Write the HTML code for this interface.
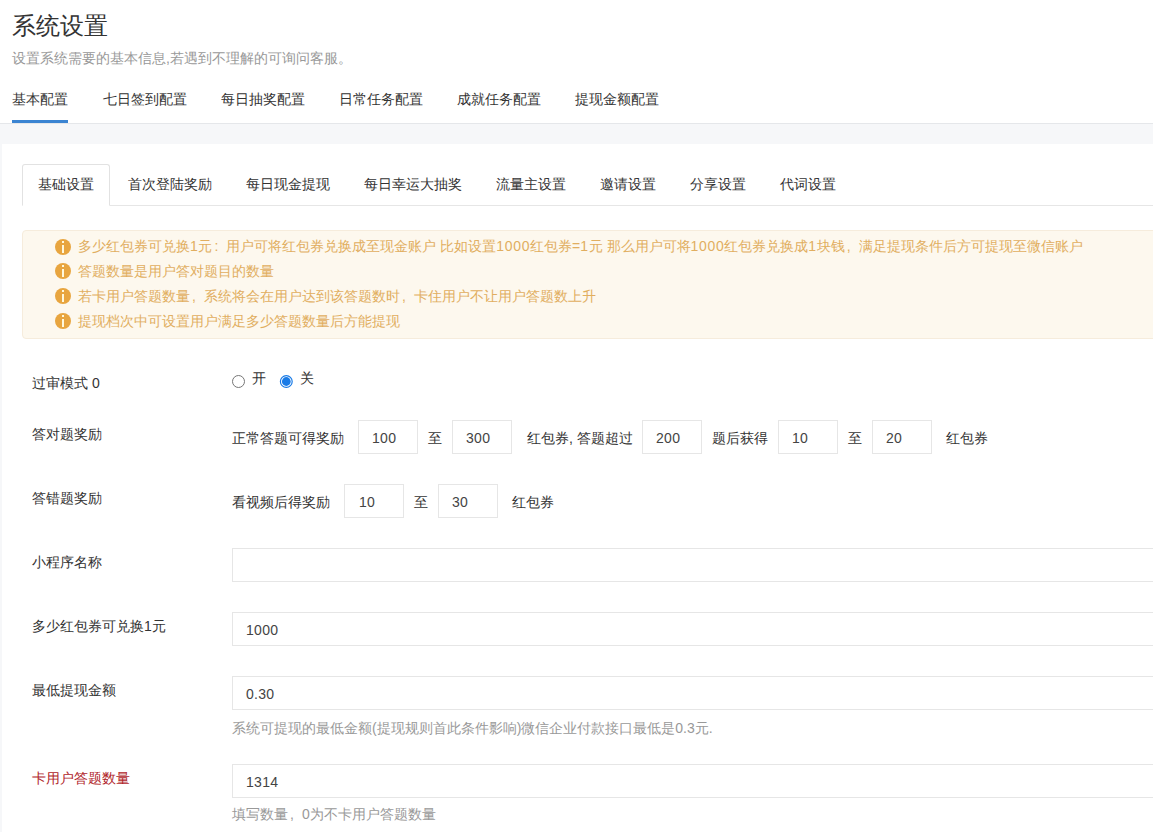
<!DOCTYPE html>
<html><head><meta charset="utf-8">
<style>
*{margin:0;padding:0;box-sizing:border-box}
html,body{width:1153px;height:832px;overflow:hidden;background:#fff}
body{position:relative;font-family:"Liberation Sans",sans-serif;font-size:14px;color:#333}
.a{position:absolute;white-space:nowrap;line-height:20px}
.title{left:12px;top:12px;font-size:24px;line-height:28px;color:#333}
.sub{left:12px;top:48px;color:#999}
.ht{top:89px;color:#333}
.uline{position:absolute;left:12px;top:120px;width:56px;height:3px;background:#3b84d2}
.hline{position:absolute;left:0;top:123px;width:1153px;height:1px;background:#e5e7ea}
.band{position:absolute;left:0;top:124px;width:1153px;height:708px;background:#f6f7f9}
.panel{position:absolute;left:2px;top:144px;width:1151px;height:688px;background:#fff}
.tabline{position:absolute;left:22px;top:205px;width:1131px;height:1px;background:#e6e6e6}
.tabact{position:absolute;left:22px;top:164px;width:88px;height:42px;border:1px solid #e2e2e2;border-bottom:1px solid #fff;border-radius:3px 3px 0 0;background:#fff}
.pt{top:174px;color:#333}
.alert{position:absolute;left:22px;top:230px;width:1140px;height:109px;background:#fdf8ee;border:1px solid #f6ecdc;border-radius:4px}
.ic{position:absolute;left:55px;width:16px;height:16px;border-radius:50%;background:#e8a53f}
.ic:before{content:"";position:absolute;left:7px;top:2px;width:2px;height:2px;background:#fff8dc}
.ic:after{content:"";position:absolute;left:7px;top:5.5px;width:2px;height:8px;background:#fff8dc}
.at{left:78px;color:#e1ae60}.at b{font-weight:normal;letter-spacing:0.65px}
.lbl{left:32px;color:#333}
.inp{position:absolute;height:34px;border:1px solid #e6e6e6;background:#fff}
.iv{position:absolute;color:#444;margin:0 0 0 1px;letter-spacing:0.3px}
.help{left:232px;color:#999}
.fw{font-style:normal;display:inline-block;width:14px;padding-left:2px}
</style></head><body>
<div class="a title">系统设置</div>
<div class="a sub">设置系统需要的基本信息,若遇到不理解的可询问客服。</div>
<div class="a ht" style="left:12px">基本配置</div>
<div class="a ht" style="left:102.7px">七日签到配置</div>
<div class="a ht" style="left:220.8px">每日抽奖配置</div>
<div class="a ht" style="left:338.8px">日常任务配置</div>
<div class="a ht" style="left:456.8px">成就任务配置</div>
<div class="a ht" style="left:574.8px">提现金额配置</div>
<div class="uline"></div>
<div class="hline"></div>
<div class="band"></div>
<div class="panel"></div>
<div class="tabline"></div>
<div class="tabact"></div>
<div class="a pt" style="left:38px">基础设置</div>
<div class="a pt" style="left:128px">首次登陆奖励</div>
<div class="a pt" style="left:246px">每日现金提现</div>
<div class="a pt" style="left:364px">每日幸运大抽奖</div>
<div class="a pt" style="left:496px">流量主设置</div>
<div class="a pt" style="left:600px">邀请设置</div>
<div class="a pt" style="left:690px">分享设置</div>
<div class="a pt" style="left:780px">代词设置</div>

<div class="alert"></div>
<div class="ic" style="top:239px"></div>
<div class="ic" style="top:263px"></div>
<div class="ic" style="top:288px"></div>
<div class="ic" style="top:313px"></div>
<div class="a at" style="top:236px">多少红包券可兑换<b>1</b>元<i class="fw">:</i>用户可将红包券兑换成至现金账户 比如设置<b>1000</b>红包券=<b>1</b>元 那么用户可将<b>1000</b>红包券兑换成<b>1</b>块钱<i class="fw">,</i>满足提现条件后方可提现至微信账户</div>
<div class="a at" style="top:261px">答题数量是用户答对题目的数量</div>
<div class="a at" style="top:286px">若卡用户答题数量<i class="fw">,</i>系统将会在用户达到该答题数时<i class="fw">,</i>卡住用户不让用户答题数上升</div>
<div class="a at" style="top:311px">提现档次中可设置用户满足多少答题数量后方能提现</div>

<div class="a lbl" style="top:373px">过审模式 0</div>
<div class="a lbl" style="top:424px">答对题奖励</div>
<div class="a lbl" style="top:488px">答错题奖励</div>
<div class="a lbl" style="top:552px">小程序名称</div>
<div class="a lbl" style="top:616px">多少红包券可兑换1元</div>
<div class="a lbl" style="top:680px">最低提现金额</div>
<div class="a lbl" style="top:768px;color:#b0252a">卡用户答题数量</div>

<svg style="position:absolute;left:231px;top:374px" width="16" height="16"><circle cx="7.5" cy="7.5" r="6" fill="#fff" stroke="#767676" stroke-width="1"/></svg>
<div class="a" style="left:252px;top:368px">开</div>
<svg style="position:absolute;left:279px;top:374px" width="16" height="16"><circle cx="7.3" cy="7.5" r="5.9" fill="#fff" stroke="#1a7be6" stroke-width="1.2"/><circle cx="7.3" cy="7.5" r="4.4" fill="#1a7be6"/></svg>
<div class="a" style="left:300px;top:368px">关</div>

<div class="a" style="left:232px;top:428px">正常答题可得奖励</div>
<div class="inp" style="left:358px;top:420px;width:60px"></div><div class="a iv" style="left:371px;top:428px">100</div>
<div class="a" style="left:428px;top:428px">至</div>
<div class="inp" style="left:452px;top:420px;width:60px"></div><div class="a iv" style="left:465px;top:428px">300</div>
<div class="a" style="left:527px;top:428px">红包券, 答题超过</div>
<div class="inp" style="left:642px;top:420px;width:60px"></div><div class="a iv" style="left:655px;top:428px">200</div>
<div class="a" style="left:712px;top:428px">题后获得</div>
<div class="inp" style="left:778px;top:420px;width:60px"></div><div class="a iv" style="left:791px;top:428px">10</div>
<div class="a" style="left:848px;top:428px">至</div>
<div class="inp" style="left:872px;top:420px;width:60px"></div><div class="a iv" style="left:885px;top:428px">20</div>
<div class="a" style="left:946px;top:428px">红包券</div>

<div class="a" style="left:232px;top:492px">看视频后得奖励</div>
<div class="inp" style="left:344px;top:484px;width:60px"></div><div class="a iv" style="left:358px;top:492px">10</div>
<div class="a" style="left:414px;top:492px">至</div>
<div class="inp" style="left:438px;top:484px;width:60px"></div><div class="a iv" style="left:451px;top:492px">30</div>
<div class="a" style="left:512px;top:492px">红包券</div>

<div class="inp" style="left:232px;top:548px;width:940px"></div>
<div class="inp" style="left:232px;top:612px;width:940px"></div><div class="a iv" style="left:245px;top:620px">1000</div>
<div class="inp" style="left:232px;top:676px;width:940px"></div><div class="a iv" style="left:245px;top:684px">0.30</div>
<div class="a help" style="left:232px;top:718px">系统可提现的最低金额(提现规则首此条件影响)微信企业付款接口最低是0.3元.</div>
<div class="inp" style="left:232px;top:764px;width:940px"></div><div class="a iv" style="left:245px;top:772px">1314</div>
<div class="a help" style="left:232px;top:804px">填写数量<i class="fw">,</i>0为不卡用户答题数量</div>
</body></html>
